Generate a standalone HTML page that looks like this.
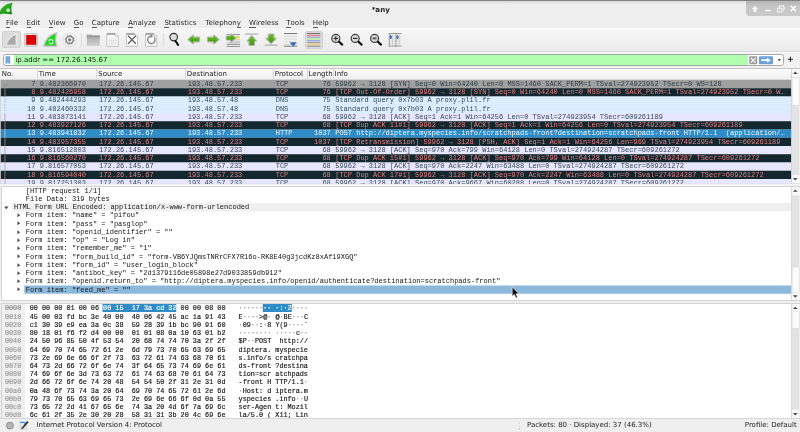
<!DOCTYPE html><html><head><meta charset="utf-8"><title>*any</title><style>
*{box-sizing:border-box;margin:0;padding:0}
html,body{width:800px;height:432px;overflow:hidden;background:#efefef}
body{position:relative;font-family:"DejaVu Sans","Liberation Sans",sans-serif;font-size:7.1px;color:#1a1a1a}
.abs{position:absolute}
#root{position:absolute;left:0;top:0;width:800px;height:432px;overflow:hidden;will-change:transform;transform:translateZ(0)}
.mono{font-family:"Liberation Mono",monospace;font-size:7px;white-space:pre}
#top{left:0;top:0;width:800px;height:2px;background:linear-gradient(#787878,#888 35%,rgba(200,200,200,0.5) 70%,rgba(230,230,230,0))}
#title{left:0;top:1px;width:800px;height:15px;background:linear-gradient(#e2e2e2,#eeeeee 25%,#efefef)}
#ttext{left:371.7px;top:4.7px;font-weight:bold;font-size:7.05px;line-height:9px;color:#222}
#wctl{left:746px;top:0.6px;width:54px;height:15px;background:linear-gradient(#b4b4b4,#c6c6c6 35%,#c9c9c9);border-bottom-left-radius:3.5px}
#menu{left:0;top:16px;width:800px;height:13px;background:#efefef}
#menu span{position:absolute;top:2.6px;line-height:9px;font-size:7px;color:#262626}
#menu u{text-decoration:none;border-bottom:0.6px solid rgba(40,40,40,0.75);padding-bottom:0;display:inline-block;line-height:8.3px}
#tool{left:0;top:28.4px;width:800px;height:23.4px;background:linear-gradient(#f7f7f7,#ebebeb);border-top:0.8px solid #fafafa;border-bottom:0.8px solid #d9d9d9}
.pressed{background:#dcdcdc;border:0.6px solid #d0d0d0;border-radius:1.8px}
.tsep{width:1px;top:33px;height:14px;background:#dcdcdc}
#fbar{left:0;top:51.8px;width:800px;height:16.5px;background:#f1f1f1;border-top:1px solid #fbfbfb}
#fbox{left:2.5px;top:54.2px;width:781.5px;height:11.5px;border:0.8px solid #a9a9a9;border-radius:2.5px;background:#fff;overflow:hidden}
#fgreen{left:10.8px;top:0;width:734px;height:11px;background:#afffaf}
#ftext{left:15.4px;top:56.0px;font-size:7px;line-height:9px;color:#111}
#plist{left:0;top:68px;width:800px;height:116px;background:#d4d4d4;border-top:1px solid #c6c6c6;overflow:hidden}
#phead{left:0;top:69px;width:791.5px;height:10.8px;background:linear-gradient(#fcfcfc,#f0f0f0);border-bottom:0.5px solid #d8d8d8}
#phead span{position:absolute;top:1.3px;line-height:9px;font-size:7px;color:#202020}
#phead i{position:absolute;top:0;width:1px;height:10.8px;background:#dadada}
.row{left:0.8px;width:790.6px;height:8.25px;overflow:hidden}
.row span{position:absolute;top:-0.1px;line-height:8.25px}
.sb{background:#f1f1f1;border-left:1px solid #dcdcdc}
.thumb{background:#fdfdfd;border:0.6px solid #d0d0d0}
#dpane{left:1px;top:186.3px;width:799px;height:114.5px;background:#fff;border:1px solid #d4d4d4;border-right:none;overflow:hidden}
.drow{left:0;width:791px;height:8.25px;line-height:8.25px}
.drow span{position:absolute;top:0.2px;color:#141414}
#hpane{left:1px;top:303px;width:799px;height:115.2px;background:#fff;border:1px solid #d4d4d4;border-right:none;border-bottom:none;overflow:hidden}
.hrow{left:0;height:8.23px;line-height:8.23px}
.hrow span{position:absolute;top:0.2px}
#status{left:0;top:418.2px;width:800px;height:13.8px;background:#efefef;border-top:1px solid #d6d6d6}
#status span{position:absolute;top:2.3px;line-height:9px;font-size:7px;color:#1c1c1c}
</style></head><body><div id="root">
<div id="title" class="abs"></div><div id="top" class="abs"></div>
<svg class="abs" style="left:0;top:0" width="16" height="17" viewBox="0 0 16 17"><defs><linearGradient id="gapp" x1="0.2" y1="0.1" x2="0.9" y2="1"><stop offset="0" stop-color="#3cba2c"/><stop offset="0.55" stop-color="#1ea41a"/><stop offset="1" stop-color="#0a8412"/></linearGradient></defs><path d="M-0.6 14.2 C0 8.4 5 3.6 12.6 2.8 C11.1 6.6 11.1 10.8 12.2 14.6 C8 13.6 3.5 13.6 -0.5 14.4Z" fill="url(#gapp)"/><circle cx="8.1" cy="10.2" r="2" fill="#b4e0ac"/><circle cx="8.1" cy="10.2" r="0.9" fill="#d8f2d2"/></svg>
<div id="ttext" class="abs">*any</div>
<div id="wctl" class="abs"></div>
<svg class="abs" style="left:746px;top:0px" width="54" height="16" viewBox="746 0 54 16" fill="none" stroke="#fafafa"><path d="M754.9 6.3 L757.5 9.1 H756.1 V11.4 H753.7 V9.1 H752.3Z" fill="#fafafa" stroke="#fafafa" stroke-width="0.5" stroke-linejoin="round"/><path d="M766 10.4 H770" stroke-width="1.5" stroke-linecap="round"/><rect x="777.6" y="8.2" width="4.4" height="3.8" stroke-width="1"/><path d="M779.4 7.6 V5.8 H784 V10 H782.6" stroke-width="1"/><path d="M791.1 6.2 L795.5 10.6 M795.5 6.2 L791.1 10.6" stroke-width="1.5" stroke-linecap="round"/></svg>
<div id="menu" class="abs">
<span style="left:5.9px"><u>F</u>ile</span>
<span style="left:26.6px"><u>E</u>dit</span>
<span style="left:48.7px"><u>V</u>iew</span>
<span style="left:73.7px"><u>G</u>o</span>
<span style="left:91.8px"><u>C</u>apture</span>
<span style="left:128.3px"><u>A</u>nalyze</span>
<span style="left:164.4px"><u>S</u>tatistics</span>
<span style="left:205.5px">Telephon<u>y</u></span>
<span style="left:249px"><u>W</u>ireless</span>
<span style="left:286.3px"><u>T</u>ools</span>
<span style="left:312.8px"><u>H</u>elp</span>
</div>
<div id="tool" class="abs"></div>
<div class="abs pressed" style="left:2.3px;top:31.3px;width:18.5px;height:17.2px"></div>
<div class="abs pressed" style="left:304.6px;top:30.9px;width:18.4px;height:18px"></div>
<div class="abs tsep" style="left:81.2px"></div>
<div class="abs tsep" style="left:162.6px"></div>
<div class="abs tsep" style="left:302.6px;opacity:0.45"></div>
<div class="abs tsep" style="left:325px;opacity:0.45"></div>
<svg class="abs" style="left:0;top:29px" width="420" height="23" viewBox="0 29 420 23">
<defs>
<linearGradient id="gfold" x1="0" y1="0" x2="0" y2="1"><stop offset="0" stop-color="#a6a6a6"/><stop offset="0.25" stop-color="#b0b0b0"/><stop offset="1" stop-color="#d2d2d2"/></linearGradient>
<linearGradient id="ggrn" x1="0" y1="0" x2="0" y2="1"><stop offset="0" stop-color="#68be20"/><stop offset="1" stop-color="#3c9c08"/></linearGradient>
</defs>
<!-- start capture (grey fin) -->
<path d="M5.9 45.7 C7.2 39.6 11 35 17.3 33.6 C16.3 37.5 16.3 42 17.2 45.7" fill="none" stroke="#f1f1f1" stroke-width="0.8"/>
<path d="M15.9 34.9 C11.4 36.3 8.3 40 7.1 44.5 H16.2 C15 41.5 15 38 15.9 34.9Z" fill="#a8a8a8"/>
<!-- stop (red square) -->
<rect x="24.6" y="33.4" width="12.9" height="12.9" rx="1.4" fill="#dedede" stroke="#bcbcbc" stroke-width="0.7"/>
<rect x="26.2" y="34.9" width="10" height="9.9" rx="0.6" fill="#dc0000"/>
<!-- restart (green fin) -->
<path d="M56.6 32.9 C50 34.6 45.4 39.6 43.9 46.1 H56.8 C55.1 42 55.2 37 56.6 32.9Z" fill="#20d820" stroke="#c3bdc3" stroke-width="1.3" stroke-linejoin="round"/>
<circle cx="50.8" cy="41.7" r="2.1" fill="none" stroke="#e9fbe9" stroke-width="1.1" stroke-dasharray="5 1.6"/>
<circle cx="50" cy="39.9" r="1" fill="#ffffff"/>
<circle cx="50.9" cy="40.6" r="0.8" fill="#20d820"/>
<!-- options (gear) -->
<circle cx="69.7" cy="39.8" r="6.8" fill="#f5f5f5" stroke="#d6d6d6" stroke-width="0.8"/>
<circle cx="69.7" cy="39.8" r="3.6" fill="none" stroke="#858585" stroke-width="1.5"/>
<circle cx="69.7" cy="39.8" r="4.5" fill="none" stroke="#858585" stroke-width="0.9" stroke-dasharray="1.6 1.93"/>
<circle cx="69.7" cy="39.8" r="1.6" fill="#787878"/>
<!-- open folder -->
<path d="M86.7 34.7 H91.6 L92.2 35.5 H99.8 V45.9 H86.7Z" fill="url(#gfold)"/>
<rect x="86.7" y="35.5" width="13.1" height="1.8" fill="#9a9a9a"/>
<path d="M86.7 34.9 H91.8" stroke="#b9b9b9" stroke-width="0.6"/>
<!-- save -->
<path d="M106.8 33.4 H115.2 L118.2 36.4 V46.4 H106.8Z" fill="#fcfcfc" stroke="#aeaeae" stroke-width="0.7"/>
<path d="M115.2 33.4 V36.4 H118.2" fill="#e6e6e6" stroke="#aeaeae" stroke-width="0.5"/>
<path d="M107.2 34.1 H115" stroke="#8e8e8e" stroke-width="1.3"/>
<path d="M110.4 35.6 L111.1 34.6 L111.8 35.6Z" fill="#fcfcfc"/>
<path d="M109.2 38.6 H115.8 M109.2 40.7 H115.8 M109.2 42.8 H115.8 M109.2 44.9 H115.8 M109.3 38.6 V44.9 M111.45 38.6 V44.9 M113.6 38.6 V44.9 M115.75 38.6 V44.9" stroke="#c6c6c6" stroke-width="0.6" fill="none" stroke-dasharray="0.9 0.5"/>
<!-- close file -->
<path d="M126.4 33.4 H134.7 L137.6 36.3 V46.4 H126.4Z" fill="#fcfcfc" stroke="#aeaeae" stroke-width="0.7"/>
<path d="M134.7 33.4 V36.3 H137.6" fill="#e6e6e6" stroke="#aeaeae" stroke-width="0.5"/>
<path d="M126.8 34.1 H134.4" stroke="#8e8e8e" stroke-width="1.3"/>
<path d="M128.1 35.7 L135.8 43.7 M135.8 35.7 L128.1 43.7" stroke="#5e5e5e" stroke-width="1.25"/>
<path d="M128.8 44.9 H135.2" stroke="#c8c8c8" stroke-width="0.6" stroke-dasharray="0.9 0.6"/>
<!-- reload -->
<path d="M145.5 33.4 H153.8 L156.8 36.3 V46.4 H145.5Z" fill="#fcfcfc" stroke="#aeaeae" stroke-width="0.7"/>
<path d="M153.8 33.4 V36.3 H156.8" fill="#e6e6e6" stroke="#aeaeae" stroke-width="0.5"/>
<path d="M145.9 34.1 H153.6" stroke="#8e8e8e" stroke-width="1.3"/>
<path d="M154.2 37.4 A3.7 3.7 0 1 1 150.6 36.2" fill="none" stroke="#7c7c7c" stroke-width="1.25"/>
<path d="M150.2 34.6 L153.2 35.9 L150.8 37.9Z" fill="#7c7c7c"/>
<path d="M148 44.9 H154.4" stroke="#c8c8c8" stroke-width="0.6" stroke-dasharray="0.9 0.6"/>
<!-- find -->
<circle cx="173.7" cy="37.1" r="3.8" fill="#dedede" stroke="#303030" stroke-width="1.15"/>
<path d="M175.5 41 L178.1 44.9" stroke="#0c0c0c" stroke-width="2" stroke-linecap="round"/>
<!-- back / forward -->
<path d="M188.7 39.5 L193.1 35.8 V37.7 H199 V41.3 H193.1 V43.2Z" fill="url(#ggrn)" stroke="#b6b8b3" stroke-width="2.3" stroke-linejoin="round" paint-order="stroke"/>
<path d="M218.3 39.5 L213.9 35.8 V37.7 H208 V41.3 H213.9 V43.2Z" fill="url(#ggrn)" stroke="#b6b8b3" stroke-width="2.3" stroke-linejoin="round" paint-order="stroke"/>
<!-- goto -->
<rect x="226.4" y="33.8" width="13.6" height="13.2" fill="#f6f6f6"/>
<path d="M226.6 34.4 H240" stroke="#8c8c8c" stroke-width="0.9"/>
<path d="M234 36.1 H240 M234 39.8 H240 M232 41.4 H240" stroke="#b8b8b8" stroke-width="0.7"/>
<rect x="236" y="36.8" width="4" height="1.9" fill="#f6e52a"/>
<path d="M226.6 42.9 H240" stroke="#b6b6b6" stroke-width="1.1"/>
<path d="M226.6 44.5 H240" stroke="#9c9c9c" stroke-width="1"/>
<path d="M226.6 46.4 H240" stroke="#7e7e7e" stroke-width="0.9"/>
<path d="M235.5 38 L230.9 34.2 V36.2 H226.7 V39.8 H230.9 V41.8Z" fill="url(#ggrn)" stroke="#bdbfba" stroke-width="2" stroke-linejoin="round" paint-order="stroke"/>
<!-- first -->
<path d="M245.4 34.2 H257.8" stroke="#b2b2b2" stroke-width="1.3" stroke-linecap="round"/>
<path d="M251.75 36.3 L255.7 40.9 H254 V45 H249.5 V40.9 H247.8Z" fill="url(#ggrn)" stroke="#b6b8b3" stroke-width="2.2" stroke-linejoin="round" paint-order="stroke"/>
<!-- last -->
<path d="M265.3 45.2 H277.2" stroke="#b2b2b2" stroke-width="1.3" stroke-linecap="round"/>
<path d="M271.15 43.1 L275.6 38.5 H273.4 V34.5 H268.9 V38.5 H266.7Z" fill="url(#ggrn)" stroke="#b6b8b3" stroke-width="2.2" stroke-linejoin="round" paint-order="stroke"/>
<!-- autoscroll -->
<rect x="284" y="32.9" width="13.1" height="14" fill="#efefeb"/>
<path d="M284 33.5 H297.1" stroke="#7c7c7c" stroke-width="1"/>
<path d="M284 36.5 H297.1 M284 39.1 H297.1 M284 41.8 H297.1" stroke="#d6d6d2" stroke-width="0.7"/>
<path d="M284 45 H297.1" stroke="#b4b4b4" stroke-width="0.8"/>
<path d="M284 46.4 H297.1" stroke="#8a8a8a" stroke-width="0.9"/>
<path d="M290 42.6 H296.4 L293.2 46.2Z" fill="#2e68c0" stroke="#2e68c0" stroke-width="0.4" stroke-linejoin="round"/>
<!-- colorize -->
<path d="M307.1 33.5 H320.3" stroke="#707070" stroke-width="1"/>
<path d="M307.1 35.4 H320.3" stroke="#f07272" stroke-width="1.1"/>
<path d="M307.1 37.25 H320.3" stroke="#86a8dc" stroke-width="1.1"/>
<path d="M307.1 38.95 H320.3" stroke="#c6eea0" stroke-width="1.7"/>
<path d="M307.1 40.65 H320.3" stroke="#86a8dc" stroke-width="1.1"/>
<path d="M307.1 42.5 H320.3" stroke="#a48cbc" stroke-width="1"/>
<path d="M307.1 44.4 H320.3" stroke="#e8d274" stroke-width="1.6"/>
<path d="M307.1 46.25 H320.3" stroke="#8e8e96" stroke-width="1.1"/>
<!-- zoom in/out/1 -->
<g>
<circle cx="335.8" cy="38.4" r="4" fill="#d8d8d8" stroke="#3c3c3c" stroke-width="1.2"/>
<path d="M339.1 41.8 L342.2 44.6" stroke="#0c0c0c" stroke-width="2.1" stroke-linecap="round"/>
<path d="M333.6 38.4 H338 M335.8 36.2 V40.6" stroke="#222" stroke-width="1"/>
<circle cx="355.2" cy="38.4" r="4" fill="#d8d8d8" stroke="#3c3c3c" stroke-width="1.2"/>
<path d="M358.5 41.8 L361.6 44.6" stroke="#0c0c0c" stroke-width="2.1" stroke-linecap="round"/>
<path d="M353 38.4 H357.4" stroke="#222" stroke-width="1.1"/>
<circle cx="374.6" cy="38.4" r="4" fill="#d8d8d8" stroke="#3c3c3c" stroke-width="1.2"/>
<path d="M377.9 41.8 L381 44.6" stroke="#0c0c0c" stroke-width="2.1" stroke-linecap="round"/>
<rect x="372.7" y="37.3" width="3.8" height="2.1" fill="#606060"/>
</g>
<!-- resize columns -->
<rect x="388.9" y="33.1" width="12.7" height="13.7" fill="#f1f1ed"/>
<path d="M388.9 33.5 H401.6" stroke="#8a8a8a" stroke-width="0.9"/>
<path d="M388.9 36.4 H401.6 M388.9 38.8 H401.6 M388.9 41.2 H401.6 M388.9 43.6 H401.6" stroke="#d4d4cf" stroke-width="0.6"/>
<path d="M388.9 46 H401.6" stroke="#909090" stroke-width="0.9"/>
<path d="M392.6 33.5 V46.4 M399.2 33.5 V46.4" stroke="#c2c2be" stroke-width="0.7"/>
<path d="M389.3 33.1 V46.8 M395.9 33.1 V46.8" stroke="#8c8c8c" stroke-width="0.8"/>
<path d="M389.9 35.3 H391.2 L392.1 37.1 L391.2 38.9 H389.9Z" fill="#2e68c0"/><path d="M396.6 35.3 H397.9 L398.8 37.1 L397.9 38.9 H396.6Z" fill="#2e68c0"/>
</svg>

<div id="fbar" class="abs"></div><div id="fbox" class="abs"><div id="fgreen" class="abs"></div></div>
<svg class="abs" style="left:4.6px;top:55.6px" width="6" height="9" viewBox="0 0 6 9"><path d="M0.5 0.3 H5.2 V8.4 L2.85 6.8 L0.5 8.4Z" fill="#78a6dc"/></svg>
<div id="ftext" class="abs">ip.addr == 172.26.145.67</div>
<svg class="abs" style="left:748.6px;top:55.5px" width="36" height="9" viewBox="0 0 36 9"><rect x="0.2" y="0.2" width="8" height="8" rx="0.8" fill="#9e9e9e"/><path d="M1.8 1.8 L6.6 6.6 M6.6 1.8 L1.8 6.6" stroke="#fafafa" stroke-width="1.15"/><rect x="10" y="0.2" width="14" height="8" rx="1" fill="#6d9fd8"/><path d="M12.2 3.3 H18 V1.7 L21.8 4.2 L18 6.7 V5.1 H12.2Z" fill="#fff"/><path d="M28.6 3.3 H32 L30.3 5.2Z" fill="#333"/></svg>
<svg class="abs" style="left:786.9px;top:56.2px" width="7" height="7" viewBox="0 0 7 7"><path d="M3.4 0.8 V5.8 M0.9 3.3 H5.9" stroke="#222" stroke-width="1.1"/></svg>
<div id="plist" class="abs"></div>
<div id="phead" class="abs">
<span style="left:1.7px">No.</span>
<span style="left:38.8px">Time</span>
<span style="left:98.2px">Source</span>
<span style="left:186.8px">Destination</span>
<span style="left:274.8px">Protocol</span>
<span style="left:308.6px">Length</span>
<span style="left:334.6px">Info</span>
<i style="left:37.2px"></i>
<i style="left:96.4px"></i>
<i style="left:185.2px"></i>
<i style="left:273.3px"></i>
<i style="left:307.3px"></i>
<i style="left:333px"></i>
</div>
<svg class="abs" style="left:0;top:0" width="800" height="432" viewBox="0 0 800 432"><rect x="0.8" y="80.000" width="790.7" height="8.250" fill="#a0a0a0"/><rect x="0.8" y="88.250" width="790.7" height="8.250" fill="#12272e"/><rect x="0.8" y="96.500" width="790.7" height="8.250" fill="#daeeff"/><rect x="0.8" y="104.750" width="790.7" height="8.250" fill="#daeeff"/><rect x="0.8" y="113.000" width="790.7" height="8.250" fill="#e7e6ff"/><rect x="0.8" y="121.250" width="790.7" height="8.250" fill="#12272e"/><rect x="0.8" y="129.500" width="790.7" height="8.250" fill="#308cc6"/><rect x="0.8" y="137.750" width="790.7" height="8.250" fill="#12272e"/><rect x="0.8" y="146.000" width="790.7" height="8.250" fill="#e7e6ff"/><rect x="0.8" y="154.250" width="790.7" height="8.250" fill="#12272e"/><rect x="0.8" y="162.500" width="790.7" height="8.250" fill="#e7e6ff"/><rect x="0.8" y="170.750" width="790.7" height="8.250" fill="#12272e"/><rect x="0.8" y="179.000" width="790.7" height="4.800" fill="#e7e6ff"/><rect x="4.4" y="84.500" width="1.1" height="3.750" fill="#8b999e"/><rect x="4.4" y="84.400" width="4.3" height="0.8" fill="#8b999e"/><rect x="4.4" y="88.250" width="1.1" height="8.250" fill="#86676a"/><path d="M4.95 96.500 V104.750" stroke="#aebbc8" stroke-width="1.1" stroke-dasharray="1.3 1.3"/><path d="M4.95 104.750 V113.000" stroke="#aebbc8" stroke-width="1.1" stroke-dasharray="1.3 1.3"/><rect x="4.4" y="113.000" width="1.1" height="8.250" fill="#b2b3ca"/><rect x="4.4" y="121.250" width="1.1" height="8.250" fill="#86676a"/><rect x="4.4" y="129.500" width="1.1" height="8.250" fill="#8cc0e0"/><rect x="4.4" y="137.750" width="1.1" height="8.250" fill="#86676a"/><rect x="4.4" y="146.000" width="1.1" height="8.250" fill="#b2b3ca"/><rect x="4.4" y="154.250" width="1.1" height="8.250" fill="#86676a"/><rect x="4.4" y="162.500" width="1.1" height="8.250" fill="#b2b3ca"/><rect x="4.4" y="170.750" width="1.1" height="8.250" fill="#86676a"/><rect x="4.4" y="179.000" width="1.1" height="4.800" fill="#b2b3ca"/></svg>
<div class="abs row mono" style="top:80.00px;height:8.25px;color:#2c3d43">
<span style="left:30.40px">7</span>
<span style="left:38.9px">9.482366970</span>
<span style="left:98.3px">172.26.145.67</span>
<span style="left:186.9px">193.48.57.233</span>
<span style="left:274.9px">TCP</span>
<span style="left:321.60px">76</span>
<span style="left:334.4px">59962 → 3128 [SYN] Seq=0 Win=64240 Len=0 MSS=1460 SACK_PERM=1 TSval=274923952 TSecr=0 WS=128</span>
</div>
<div class="abs row mono" style="top:88.25px;height:8.25px;color:#e57f80">
<span style="left:30.40px">8</span>
<span style="left:38.9px">9.482426958</span>
<span style="left:98.3px">172.26.145.67</span>
<span style="left:186.9px">193.48.57.233</span>
<span style="left:274.9px">TCP</span>
<span style="left:321.60px">76</span>
<span style="left:334.4px">[TCP Out-Of-Order] 59962 → 3128 [SYN] Seq=0 Win=64240 Len=0 MSS=1460 SACK_PERM=1 TSval=274923952 TSecr=0 W…</span>
</div>
<div class="abs row mono" style="top:96.50px;height:8.25px;color:#364b54">
<span style="left:30.40px">9</span>
<span style="left:38.9px">9.482444293</span>
<span style="left:98.3px">172.26.145.67</span>
<span style="left:186.9px">193.48.57.48</span>
<span style="left:274.9px">DNS</span>
<span style="left:321.60px">75</span>
<span style="left:334.4px">Standard query 0x7b03 A proxy.plil.fr</span>
</div>
<div class="abs row mono" style="top:104.75px;height:8.25px;color:#364b54">
<span style="left:26.20px">10</span>
<span style="left:38.9px">9.482460332</span>
<span style="left:98.3px">172.26.145.67</span>
<span style="left:186.9px">193.48.57.48</span>
<span style="left:274.9px">DNS</span>
<span style="left:321.60px">75</span>
<span style="left:334.4px">Standard query 0x7b03 A proxy.plil.fr</span>
</div>
<div class="abs row mono" style="top:113.00px;height:8.25px;color:#384954">
<span style="left:26.20px">11</span>
<span style="left:38.9px">9.483873141</span>
<span style="left:98.3px">172.26.145.67</span>
<span style="left:186.9px">193.48.57.233</span>
<span style="left:274.9px">TCP</span>
<span style="left:321.60px">68</span>
<span style="left:334.4px">59962 → 3128 [ACK] Seq=1 Ack=1 Win=64256 Len=0 TSval=274923954 TSecr=609261189</span>
</div>
<div class="abs row mono" style="top:121.25px;height:8.25px;color:#e57f80">
<span style="left:26.20px">12</span>
<span style="left:38.9px">9.483927126</span>
<span style="left:98.3px">172.26.145.67</span>
<span style="left:186.9px">193.48.57.233</span>
<span style="left:274.9px">TCP</span>
<span style="left:321.60px">68</span>
<span style="left:334.4px">[TCP Dup ACK 11#1] 59962 → 3128 [ACK] Seq=1 Ack=1 Win=64256 Len=0 TSval=274923954 TSecr=609261189</span>
</div>
<div class="abs row mono" style="top:129.50px;height:8.25px;color:#eef6fa">
<span style="left:26.20px">13</span>
<span style="left:38.9px">9.483941832</span>
<span style="left:98.3px">172.26.145.67</span>
<span style="left:186.9px">193.48.57.233</span>
<span style="left:274.9px">HTTP</span>
<span style="left:313.20px">1037</span>
<span style="left:334.4px">POST http://diptera.myspecies.info/scratchpads-front?destination=scratchpads-front HTTP/1.1  (application/…</span>
</div>
<div class="abs row mono" style="top:137.75px;height:8.25px;color:#e57f80">
<span style="left:26.20px">14</span>
<span style="left:38.9px">9.483957355</span>
<span style="left:98.3px">172.26.145.67</span>
<span style="left:186.9px">193.48.57.233</span>
<span style="left:274.9px">TCP</span>
<span style="left:313.20px">1037</span>
<span style="left:334.4px">[TCP Retransmission] 59962 → 3128 [PSH, ACK] Seq=1 Ack=1 Win=64256 Len=969 TSval=274923954 TSecr=609261189</span>
</div>
<div class="abs row mono" style="top:146.00px;height:8.25px;color:#384954">
<span style="left:26.20px">15</span>
<span style="left:38.9px">9.816512803</span>
<span style="left:98.3px">172.26.145.67</span>
<span style="left:186.9px">193.48.57.233</span>
<span style="left:274.9px">TCP</span>
<span style="left:321.60px">68</span>
<span style="left:334.4px">59962 → 3128 [ACK] Seq=970 Ack=799 Win=64128 Len=0 TSval=274924287 TSecr=609261272</span>
</div>
<div class="abs row mono" style="top:154.25px;height:8.25px;color:#e57f80">
<span style="left:26.20px">16</span>
<span style="left:38.9px">9.816560270</span>
<span style="left:98.3px">172.26.145.67</span>
<span style="left:186.9px">193.48.57.233</span>
<span style="left:274.9px">TCP</span>
<span style="left:321.60px">68</span>
<span style="left:334.4px">[TCP Dup ACK 15#1] 59962 → 3128 [ACK] Seq=970 Ack=799 Win=64128 Len=0 TSval=274924287 TSecr=609261272</span>
</div>
<div class="abs row mono" style="top:162.50px;height:8.25px;color:#384954">
<span style="left:26.20px">17</span>
<span style="left:38.9px">9.816577053</span>
<span style="left:98.3px">172.26.145.67</span>
<span style="left:186.9px">193.48.57.233</span>
<span style="left:274.9px">TCP</span>
<span style="left:321.60px">68</span>
<span style="left:334.4px">59962 → 3128 [ACK] Seq=970 Ack=2247 Win=63488 Len=0 TSval=274924287 TSecr=609261272</span>
</div>
<div class="abs row mono" style="top:170.75px;height:8.25px;color:#e57f80">
<span style="left:26.20px">18</span>
<span style="left:38.9px">9.816594040</span>
<span style="left:98.3px">172.26.145.67</span>
<span style="left:186.9px">193.48.57.233</span>
<span style="left:274.9px">TCP</span>
<span style="left:321.60px">68</span>
<span style="left:334.4px">[TCP Dup ACK 17#1] 59962 → 3128 [ACK] Seq=970 Ack=2247 Win=63488 Len=0 TSval=274924287 TSecr=609261272</span>
</div>
<div class="abs row mono" style="top:179.00px;height:4.80px;color:#384954">
<span style="left:26.20px">19</span>
<span style="left:38.9px">9.817251303</span>
<span style="left:98.3px">172.26.145.67</span>
<span style="left:186.9px">193.48.57.233</span>
<span style="left:274.9px">TCP</span>
<span style="left:321.60px">68</span>
<span style="left:334.4px">59962 → 3128 [ACK] Seq=970 Ack=9667 Win=60288 Len=0 TSval=274924287 TSecr=609261272</span>
</div>
<svg class="abs" style="left:0;top:0" width="800" height="432" viewBox="0 0 800 432"><rect x="791.3" y="69" width="8.7" height="114.30000000000001" fill="#e3e3e3"/><rect x="791.3" y="69" width="0.8" height="114.30000000000001" fill="#d2d2d2"/><rect x="799.1" y="69" width="0.9" height="114.30000000000001" fill="#f2f2f2"/><rect x="792.0999999999999" y="69" width="7.3" height="8.3" fill="#f9f9f9"/><rect x="792.0999999999999" y="175.0" width="7.3" height="8.3" fill="#f9f9f9"/><rect x="792.0999999999999" y="77.8" width="7.3" height="27.400000000000006" fill="#fbfbfb" stroke="#d6d6d6" stroke-width="0.5"/><path d="M792.9 73.9 l2.4 -2.4 l2.4 2.4Z" fill="#4a4a4a"/><path d="M792.9 178.10000000000002 l2.4 2.4 l2.4 -2.4Z" fill="#4a4a4a"/></svg>
<div class="abs" style="left:0;top:183.8px;width:800px;height:2.6px;background:#f3f3f3"></div>
<div id="dpane" class="abs mono">
<svg class="abs" style="left:-2px;top:-187.3px" width="800" height="432" viewBox="0 0 800 432"><rect x="12.2" y="203.000" width="779.1" height="8.25" fill="#efefef"/><rect x="24.3" y="285.500" width="767" height="8.25" fill="#8cb9db"/></svg>
<div class="abs drow" style="top:-0.80px"><span style="left:23.7px">[HTTP request 1/1]</span></div>
<div class="abs drow" style="top:7.45px"><span style="left:23.7px">File Data: 319 bytes</span></div>
<div class="abs drow" style="top:15.70px"><svg class="abs" style="left:2.2px;top:2.6px" width="5" height="4" viewBox="0 0 5 4"><path d="M0.2 0.5 H4.4 L2.3 3.2Z" fill="#444"/></svg><span style="left:12.0px">HTML Form URL Encoded: application/x-www-form-urlencoded</span></div>
<div class="abs drow" style="top:23.95px"><svg class="abs" style="left:14.6px;top:2px" width="4" height="5" viewBox="0 0 4 5"><path d="M0.5 0.3 L3.1 2.3 L0.5 4.3Z" fill="#444"/></svg><span style="left:23.7px">Form item: &quot;name&quot; = &quot;pifou&quot;</span></div>
<div class="abs drow" style="top:32.20px"><svg class="abs" style="left:14.6px;top:2px" width="4" height="5" viewBox="0 0 4 5"><path d="M0.5 0.3 L3.1 2.3 L0.5 4.3Z" fill="#444"/></svg><span style="left:23.7px">Form item: &quot;pass&quot; = &quot;pasglop&quot;</span></div>
<div class="abs drow" style="top:40.45px"><svg class="abs" style="left:14.6px;top:2px" width="4" height="5" viewBox="0 0 4 5"><path d="M0.5 0.3 L3.1 2.3 L0.5 4.3Z" fill="#444"/></svg><span style="left:23.7px">Form item: &quot;openid_identifier&quot; = &quot;&quot;</span></div>
<div class="abs drow" style="top:48.70px"><svg class="abs" style="left:14.6px;top:2px" width="4" height="5" viewBox="0 0 4 5"><path d="M0.5 0.3 L3.1 2.3 L0.5 4.3Z" fill="#444"/></svg><span style="left:23.7px">Form item: &quot;op&quot; = &quot;Log in&quot;</span></div>
<div class="abs drow" style="top:56.95px"><svg class="abs" style="left:14.6px;top:2px" width="4" height="5" viewBox="0 0 4 5"><path d="M0.5 0.3 L3.1 2.3 L0.5 4.3Z" fill="#444"/></svg><span style="left:23.7px">Form item: &quot;remember_me&quot; = &quot;1&quot;</span></div>
<div class="abs drow" style="top:65.20px"><svg class="abs" style="left:14.6px;top:2px" width="4" height="5" viewBox="0 0 4 5"><path d="M0.5 0.3 L3.1 2.3 L0.5 4.3Z" fill="#444"/></svg><span style="left:23.7px">Form item: &quot;form_build_id&quot; = &quot;form-VB6YJQmsTNRrCFX7R16o-RK8E40g3jcdKz8xAf19XGQ&quot;</span></div>
<div class="abs drow" style="top:73.45px"><svg class="abs" style="left:14.6px;top:2px" width="4" height="5" viewBox="0 0 4 5"><path d="M0.5 0.3 L3.1 2.3 L0.5 4.3Z" fill="#444"/></svg><span style="left:23.7px">Form item: &quot;form_id&quot; = &quot;user_login_block&quot;</span></div>
<div class="abs drow" style="top:81.70px"><svg class="abs" style="left:14.6px;top:2px" width="4" height="5" viewBox="0 0 4 5"><path d="M0.5 0.3 L3.1 2.3 L0.5 4.3Z" fill="#444"/></svg><span style="left:23.7px">Form item: &quot;antibot_key&quot; = &quot;2d1379116de05898e27d9033859db912&quot;</span></div>
<div class="abs drow" style="top:89.95px"><svg class="abs" style="left:14.6px;top:2px" width="4" height="5" viewBox="0 0 4 5"><path d="M0.5 0.3 L3.1 2.3 L0.5 4.3Z" fill="#444"/></svg><span style="left:23.7px">Form item: &quot;openid.return_to&quot; = &quot;http://diptera.myspecies.info/openid/authenticate?destination=scratchpads-front&quot;</span></div>
<div class="abs drow" style="top:98.20px"><svg class="abs" style="left:14.6px;top:2px" width="4" height="5" viewBox="0 0 4 5"><path d="M0.5 0.3 L3.1 2.3 L0.5 4.3Z" fill="#444"/></svg><span style="left:23.7px">Form item: &quot;feed_me&quot; = &quot;&quot;</span></div>
</div>
<svg class="abs" style="left:0;top:0" width="800" height="432" viewBox="0 0 800 432"><rect x="791.3" y="187.2" width="8.7" height="112.80000000000001" fill="#e3e3e3"/><rect x="791.3" y="187.2" width="0.8" height="112.80000000000001" fill="#d2d2d2"/><rect x="799.1" y="187.2" width="0.9" height="112.80000000000001" fill="#f2f2f2"/><rect x="792.0999999999999" y="187.2" width="7.3" height="8.3" fill="#f9f9f9"/><rect x="792.0999999999999" y="291.7" width="7.3" height="8.3" fill="#f9f9f9"/><rect x="792.0999999999999" y="267" width="7.3" height="25.19999999999999" fill="#fbfbfb" stroke="#d6d6d6" stroke-width="0.5"/><path d="M792.9 191.79999999999998 l2.4 -2.4 l2.4 2.4Z" fill="#4a4a4a"/><path d="M792.9 295.3 l2.4 2.4 l2.4 -2.4Z" fill="#4a4a4a"/></svg>
<svg class="abs" style="left:510px;top:285px" width="12" height="15" viewBox="510 285 12 15"><path d="M512.2 286.9 V296.3 L514.3 294.4 L516 298 L517.5 297.3 L515.9 293.8 H518.9Z" fill="#0a0a0a" stroke="#f4f4f4" stroke-width="0.6" stroke-linejoin="round"/></svg>
<div id="hpane" class="abs mono" style="font-size:6.807px;-webkit-text-stroke:0.16px">
<div class="abs" style="left:0;top:0;width:22.6px;height:116px;background:#efefef"></div>
<svg class="abs" style="left:-2px;top:-304px" width="800" height="432" viewBox="0 0 800 432"><rect x="102.54" y="303.7" width="73.64" height="8.3" fill="#308cc6"/><rect x="262.78" y="303.7" width="28.96" height="8.3" fill="#308cc6"/></svg>
<div class="abs hrow" style="top:0.20px;width:790px">
<span style="left:2.9px;color:#8a8a8a">0000</span>
<span style="left:27.7px;color:#141414">00 00 00 01 00 06 <b style="font-weight:normal;color:#fff">00 15  17 3a cd 32</b> 00 00 08 00</span>
<span style="left:236.6px;color:#9a9a9a">······<b style="font-weight:normal;color:#fff">·· ·:·2</b>····</span>
</div>
<div class="abs hrow" style="top:8.43px;width:790px">
<span style="left:2.9px;color:#9a9a9a">0010</span>
<span style="left:27.7px;color:#141414">45 00 03 fd bc 3e 40 00  40 06 42 45 ac 1a 91 43</span>
<span style="left:236.6px;color:#141414">E<b style="font-weight:normal;color:#9a9a9a">·</b><b style="font-weight:normal;color:#9a9a9a">·</b><b style="font-weight:normal;color:#9a9a9a">·</b><b style="font-weight:normal;color:#9a9a9a">·</b>&gt;@<b style="font-weight:normal;color:#9a9a9a">·</b> @<b style="font-weight:normal;color:#9a9a9a">·</b>BE<b style="font-weight:normal;color:#9a9a9a">·</b><b style="font-weight:normal;color:#9a9a9a">·</b><b style="font-weight:normal;color:#9a9a9a">·</b>C</span>
</div>
<div class="abs hrow" style="top:16.66px;width:790px">
<span style="left:2.9px;color:#9a9a9a">0020</span>
<span style="left:27.7px;color:#141414">c1 30 39 e9 ea 3a 0c 38  59 28 39 1b bc 90 91 60</span>
<span style="left:236.6px;color:#141414"><b style="font-weight:normal;color:#9a9a9a">·</b>09<b style="font-weight:normal;color:#9a9a9a">·</b><b style="font-weight:normal;color:#9a9a9a">·</b>:<b style="font-weight:normal;color:#9a9a9a">·</b>8 Y(9<b style="font-weight:normal;color:#9a9a9a">·</b><b style="font-weight:normal;color:#9a9a9a">·</b><b style="font-weight:normal;color:#9a9a9a">·</b><b style="font-weight:normal;color:#9a9a9a">·</b>`</span>
</div>
<div class="abs hrow" style="top:24.89px;width:790px">
<span style="left:2.9px;color:#9a9a9a">0030</span>
<span style="left:27.7px;color:#141414">80 18 01 f6 f2 d4 00 00  01 01 08 0a 10 63 01 b2</span>
<span style="left:236.6px;color:#141414"><b style="font-weight:normal;color:#9a9a9a">·</b><b style="font-weight:normal;color:#9a9a9a">·</b><b style="font-weight:normal;color:#9a9a9a">·</b><b style="font-weight:normal;color:#9a9a9a">·</b><b style="font-weight:normal;color:#9a9a9a">·</b><b style="font-weight:normal;color:#9a9a9a">·</b><b style="font-weight:normal;color:#9a9a9a">·</b><b style="font-weight:normal;color:#9a9a9a">·</b> <b style="font-weight:normal;color:#9a9a9a">·</b><b style="font-weight:normal;color:#9a9a9a">·</b><b style="font-weight:normal;color:#9a9a9a">·</b><b style="font-weight:normal;color:#9a9a9a">·</b><b style="font-weight:normal;color:#9a9a9a">·</b>c<b style="font-weight:normal;color:#9a9a9a">·</b><b style="font-weight:normal;color:#9a9a9a">·</b></span>
</div>
<div class="abs hrow" style="top:33.12px;width:790px">
<span style="left:2.9px;color:#9a9a9a">0040</span>
<span style="left:27.7px;color:#141414">24 50 96 85 50 4f 53 54  20 68 74 74 70 3a 2f 2f</span>
<span style="left:236.6px;color:#141414">$P<b style="font-weight:normal;color:#9a9a9a">·</b><b style="font-weight:normal;color:#9a9a9a">·</b>POST  http://</span>
</div>
<div class="abs hrow" style="top:41.35px;width:790px">
<span style="left:2.9px;color:#9a9a9a">0050</span>
<span style="left:27.7px;color:#141414">64 69 70 74 65 72 61 2e  6d 79 73 70 65 63 69 65</span>
<span style="left:236.6px;color:#141414">diptera. myspecie</span>
</div>
<div class="abs hrow" style="top:49.58px;width:790px">
<span style="left:2.9px;color:#9a9a9a">0060</span>
<span style="left:27.7px;color:#141414">73 2e 69 6e 66 6f 2f 73  63 72 61 74 63 68 70 61</span>
<span style="left:236.6px;color:#141414">s.info/s cratchpa</span>
</div>
<div class="abs hrow" style="top:57.81px;width:790px">
<span style="left:2.9px;color:#9a9a9a">0070</span>
<span style="left:27.7px;color:#141414">64 73 2d 66 72 6f 6e 74  3f 64 65 73 74 69 6e 61</span>
<span style="left:236.6px;color:#141414">ds-front ?destina</span>
</div>
<div class="abs hrow" style="top:66.04px;width:790px">
<span style="left:2.9px;color:#9a9a9a">0080</span>
<span style="left:27.7px;color:#141414">74 69 6f 6e 3d 73 63 72  61 74 63 68 70 61 64 73</span>
<span style="left:236.6px;color:#141414">tion=scr atchpads</span>
</div>
<div class="abs hrow" style="top:74.27px;width:790px">
<span style="left:2.9px;color:#9a9a9a">0090</span>
<span style="left:27.7px;color:#141414">2d 66 72 6f 6e 74 20 48  54 54 50 2f 31 2e 31 0d</span>
<span style="left:236.6px;color:#141414">-front H TTP/1.1<b style="font-weight:normal;color:#9a9a9a">·</b></span>
</div>
<div class="abs hrow" style="top:82.50px;width:790px">
<span style="left:2.9px;color:#9a9a9a">00a0</span>
<span style="left:27.7px;color:#141414">0a 48 6f 73 74 3a 20 64  69 70 74 65 72 61 2e 6d</span>
<span style="left:236.6px;color:#141414"><b style="font-weight:normal;color:#9a9a9a">·</b>Host: d iptera.m</span>
</div>
<div class="abs hrow" style="top:90.73px;width:790px">
<span style="left:2.9px;color:#9a9a9a">00b0</span>
<span style="left:27.7px;color:#141414">79 73 70 65 63 69 65 73  2e 69 6e 66 6f 0d 0a 55</span>
<span style="left:236.6px;color:#141414">yspecies .info<b style="font-weight:normal;color:#9a9a9a">·</b><b style="font-weight:normal;color:#9a9a9a">·</b>U</span>
</div>
<div class="abs hrow" style="top:98.96px;width:790px">
<span style="left:2.9px;color:#9a9a9a">00c0</span>
<span style="left:27.7px;color:#141414">73 65 72 2d 41 67 65 6e  74 3a 20 4d 6f 7a 69 6c</span>
<span style="left:236.6px;color:#141414">ser-Agen t: Mozil</span>
</div>
<div class="abs hrow" style="top:107.19px;width:790px">
<span style="left:2.9px;color:#9a9a9a">00d0</span>
<span style="left:27.7px;color:#141414">6c 61 2f 35 2e 30 20 28  58 31 31 3b 20 4c 69 6e</span>
<span style="left:236.6px;color:#141414">la/5.0 ( X11; Lin</span>
</div>
</div>
<svg class="abs" style="left:0;top:0" width="800" height="432" viewBox="0 0 800 432"><rect x="791.3" y="304.2" width="8.7" height="113.90000000000003" fill="#e3e3e3"/><rect x="791.3" y="304.2" width="0.8" height="113.90000000000003" fill="#d2d2d2"/><rect x="799.1" y="304.2" width="0.9" height="113.90000000000003" fill="#f2f2f2"/><rect x="792.0999999999999" y="304.2" width="7.3" height="8.3" fill="#f9f9f9"/><rect x="792.0999999999999" y="409.8" width="7.3" height="8.3" fill="#f9f9f9"/><rect x="792.0999999999999" y="311.8" width="7.3" height="16.399999999999977" fill="#fbfbfb" stroke="#d6d6d6" stroke-width="0.5"/><path d="M792.9 309.09999999999997 l2.4 -2.4 l2.4 2.4Z" fill="#4a4a4a"/><path d="M792.9 413.0 l2.4 2.4 l2.4 -2.4Z" fill="#4a4a4a"/></svg>
<div id="status" class="abs">
<i class="abs" style="left:519.2px;top:3.5px;width:0.8px;height:8px;background:repeating-linear-gradient(#cfcfcf 0 0.8px,transparent 0.8px 1.6px)"></i><i class="abs" style="left:735.6px;top:3.5px;width:0.8px;height:8px;background:repeating-linear-gradient(#cfcfcf 0 0.8px,transparent 0.8px 1.6px)"></i>
<span style="left:36.4px">Internet Protocol Version 4: Protocol</span>
<span style="left:527px">Packets: 80 · Displayed: 37 (46.3%)</span>
<span style="left:744.8px">Profile: Default</span>
</div>
<svg class="abs" style="left:5px;top:420px" width="26" height="11" viewBox="0 0 26 11"><circle cx="4.9" cy="5.6" r="3.5" fill="#b6b6b6" stroke="#808080" stroke-width="0.8"/><rect x="15" y="2.6" width="6.6" height="7.2" fill="#e9e9e9" stroke="#c8c8c8" stroke-width="0.5"/><path d="M15.2 2.4 H19 L21 4" stroke="#3a8ede" stroke-width="1.2" fill="none"/><path d="M22.2 1.2 L17.2 7.4 L16.5 9 L18.1 8.3 L23.3 2.2Z" fill="#2c2c2c" stroke="#2c2c2c" stroke-width="0.5"/></svg>
</div></body></html>
